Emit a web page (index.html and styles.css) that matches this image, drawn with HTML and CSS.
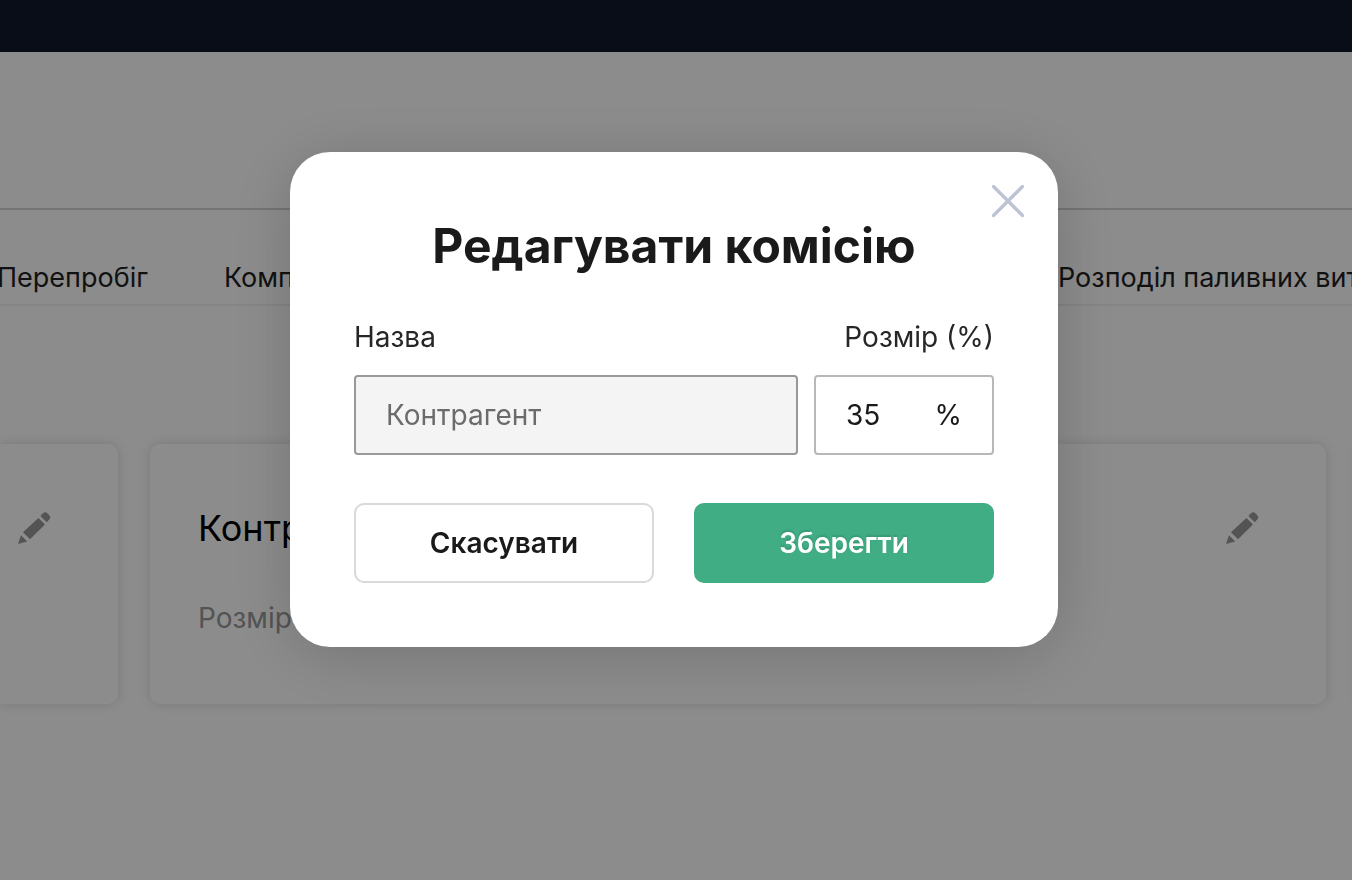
FILE: index.html
```
<!DOCTYPE html>
<html lang="uk">
<head>
<meta charset="utf-8">
<meta name="viewport" content="width=device-width, initial-scale=1">
<title>Редагувати комісію</title>
<link rel="stylesheet" href="styles.css">
</head>
<body>
<div class="page">
  <header class="topbar"></header>
  <div class="toolbar"></div>
  <nav class="tabs">
    <a class="tab" href="#mileage">Перепробіг</a>
    <a class="tab" href="#compensation">Компенсації</a>
    <a class="tab" href="#fuel">Розподіл паливних витрат</a>
  </nav>
  <main class="cards">
    <article class="card card-first">
      <button class="edit" type="button" aria-label="Редагувати">
        <svg viewBox="0 0 32 32" width="32" height="32" aria-hidden="true"><path d="M20.400 6 27 12.600 12 27.200 5 20.300ZM22.300 4 25 1.200Q27.200-.8 29.400 1.200L31.400 3.400Q33.200 5.400 31.200 7.600L28.800 10.200ZM3 23.300 9.200 29.600 0 32Z"/></svg>
      </button>
    </article>
    <article class="card">
      <div class="card-head">
        <h2 class="card-title">Контрагент</h2>
        <button class="edit" type="button" aria-label="Редагувати">
          <svg viewBox="0 0 32 32" width="32" height="32" aria-hidden="true"><path d="M20.400 6 27 12.600 12 27.200 5 20.300ZM22.300 4 25 1.200Q27.200-.8 29.400 1.200L31.400 3.400Q33.200 5.400 31.200 7.600L28.800 10.200ZM3 23.300 9.200 29.600 0 32Z"/></svg>
        </button>
      </div>
      <p class="card-text">Розмір</p>
    </article>
    <article class="card"></article>
  </main>
</div>
<div class="overlay">
  <form class="modal" role="dialog" aria-modal="true" aria-labelledby="modal-title">
    <button class="close" type="button" aria-label="Закрити">
      <svg viewBox="0 0 32 32" width="32" height="32" aria-hidden="true"><path d="M1.500 1.500 30.500 30.500M30.500 1.500 1.500 30.500"/></svg>
    </button>
    <h1 class="modal-title" id="modal-title">Редагувати комісію</h1>
    <div class="labels">
      <label for="name">Назва</label>
      <label for="size">Розмір (%)</label>
    </div>
    <div class="fields">
      <input class="field field-name" id="name" type="text" value="Контрагент" disabled>
      <div class="field field-size">
        <input class="size-input" id="size" type="text" inputmode="numeric" value="35">
        <span>%</span>
      </div>
    </div>
    <div class="actions">
      <button class="button button-cancel" type="button">Скасувати</button>
      <button class="button button-save" type="submit">Зберегти</button>
    </div>
  </form>
</div>
</body>
</html>
```
FILE: styles.css
```
* {
  box-sizing: border-box;
}

body {
  margin: 0;
  background: #fff;
  font-family: Inter, "Liberation Sans", sans-serif;
  font-size: 28px;
  line-height: 44px;
  color: #1a1a1a;
}

button,
input {
  font: inherit;
  color: inherit;
}

.page {
  min-height: 100vh;
  overflow: hidden;
}

.topbar {
  height: 52px;
  background: #10192c;
}

.toolbar {
  height: 158px;
  border-bottom: 2px solid #d3d3d3;
}

.tabs {
  display: grid;
  grid-template-columns: 148px 1fr 294px;
  gap: 76px;
  height: 96px;
  padding-top: 46px;
  border-bottom: 2px solid #f0f0f0;
  font-size: 27px;
}

.tab {
  display: flex;
  color: #1f1f1f;
  text-decoration: none;
  white-space: nowrap;
}

.tab:first-child {
  justify-content: flex-end;
}

.cards {
  display: grid;
  grid-template-columns: 118px 1fr 64px;
  gap: 32px;
  margin: 138px -70px 0 0;
}

.card {
  height: 260px;
  padding: 60px 68px 48px 48px;
  border-radius: 10px;
  background: #fff;
  box-shadow: 0 0 12px rgba(0, 0, 0, 0.14);
}

.card-first {
  padding-left: 0;
  padding-top: 68px;
  border-radius: 0 10px 10px 0;
  text-align: right;
}

.card-head {
  display: flex;
  align-items: center;
  justify-content: space-between;
}

.card-title {
  margin: 0;
  font-size: 36px;
  line-height: 48px;
  font-weight: 400;
  color: #000;
}

.card-text {
  margin: 44px 0 0;
  color: #999;
}

.edit {
  width: 32px;
  height: 32px;
  padding: 0;
  border: 0;
  background: none;
}

.edit svg {
  display: block;
  fill: #999;
  overflow: visible;
}

.overlay {
  position: fixed;
  inset: 0;
  display: flex;
  align-items: flex-start;
  justify-content: center;
  padding: 152px 4px 0 0;
  background: rgba(0, 0, 0, 0.45);
}

.modal {
  position: relative;
  width: 768px;
  max-width: 100%;
  padding: 64px;
  border-radius: 40px;
  background: #fff;
  box-shadow: 0 8px 64px rgba(0, 0, 0, 0.18);
}

.close {
  position: absolute;
  top: 33px;
  right: 34px;
  padding: 0;
  border: 0;
  background: none;
}

.close svg {
  display: block;
  fill: none;
  stroke: #bdc3d4;
  stroke-width: 3.4;
  stroke-linecap: round;
}

.modal-title {
  margin: 0 0 39px;
  font-size: 48px;
  line-height: 60px;
  font-weight: 700;
  text-align: center;
}

.labels {
  display: flex;
  justify-content: space-between;
  margin-bottom: 16px;
  color: #262626;
}

.fields {
  display: flex;
  gap: 16px;
  margin-bottom: 48px;
}

.field {
  height: 80px;
  border: 2px solid #b8b8b8;
  border-radius: 4px;
  padding: 0 30px;
}

.field-name {
  flex: 1;
  min-width: 0;
  border-color: #999;
  background: #f4f4f4;
  color: #6b6b6b;
}

.field-size {
  display: flex;
  align-items: center;
  justify-content: space-between;
  width: 180px;
}

.size-input {
  width: 64px;
  padding: 0;
  border: 0;
  outline: 0;
  background: none;
}

.actions {
  display: grid;
  grid-template-columns: 1fr 1fr;
  gap: 40px;
}

.button {
  height: 80px;
  border: 2px solid #d9d9d9;
  border-radius: 10px;
  background: #fff;
  font-weight: 600;
}

.button-save {
  border-color: #40ad85;
  background: #40ad85;
  color: #fff;
  text-shadow: 0 -2px 2px rgba(0, 0, 0, 0.12);
}
```
